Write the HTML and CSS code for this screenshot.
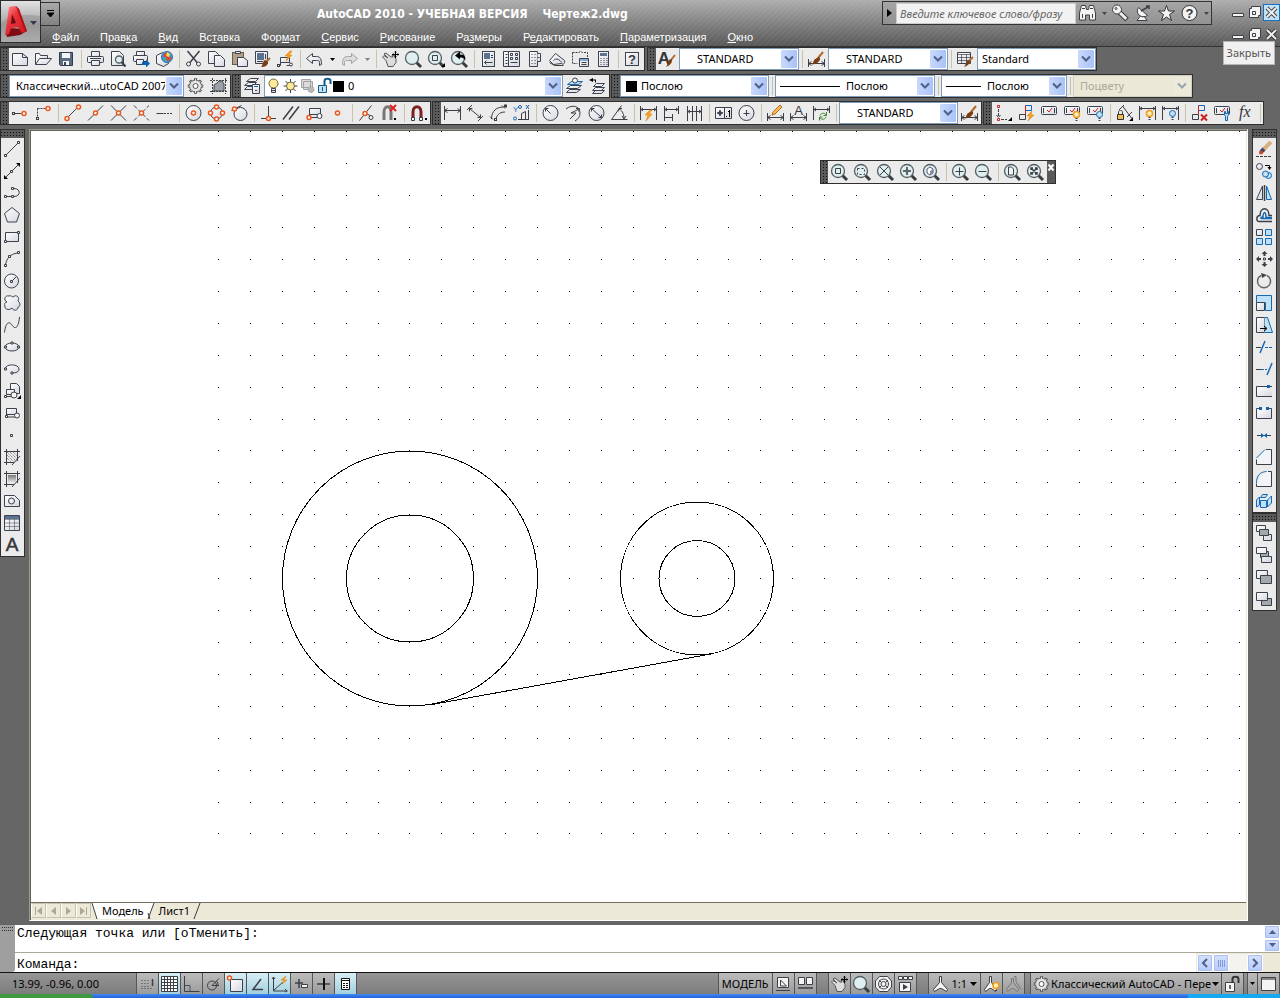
FILE: index.html
```html
<!DOCTYPE html>
<html lang="ru">
<head>
<meta charset="utf-8">
<title>AutoCAD 2010</title>
<link rel="stylesheet" href="styles.css">
</head>
<body>
<svg class="sprite" aria-hidden="true">
<defs>
<linearGradient id="pg" x1="0" y1="0" x2="1" y2="1"><stop offset="0" stop-color="#fff"/><stop offset="1" stop-color="#d5d8e0"/></linearGradient>
<linearGradient id="dk" x1="0" y1="0" x2="0" y2="1"><stop offset="0" stop-color="#777"/><stop offset="1" stop-color="#eee"/></linearGradient>
<linearGradient id="red" x1="0" y1="0" x2="1" y2="1"><stop offset="0" stop-color="#f99"/><stop offset=".4" stop-color="#e8323a"/><stop offset="1" stop-color="#d3131b"/></linearGradient>
<g id="lens"><path class="hd" d="M11.500 11.500l4.500 4.500"/><circle class="ln" cx="7" cy="7" r="6.500"/></g>
<g id="brush"><path class="wood" d="M15 1l-5 6"/><path class="br" d="M10.500 6c2 1 2 2 1 3.500c-2 3-5 4-8 4c2-1 1-2 3-5z"/></g>
<g id="bolt"><path class="bolt" d="M13 0l-5 5h3l-2 5l6-6h-3l3-4z"/></g>
<g id="bulbS"><circle class="bulb" cx="12.500" cy="9.500" r="3"/><path class="k" d="M11.500 13.500h2M11.500 15.500h2"/></g>
<g id="bulbB"><circle class="bf" cx="12.500" cy="9.500" r="3"/><path class="k" d="M11.500 13.500h2M11.500 15.500h2"/></g>
<g id="dim"><path class="k" d="M.5 8v8M16.500 8v8M.5 12.500h16M3.500 10.500l-3 2l3 2M13.500 10.500l3 2l-3 2"/></g>

<g id="new"><path class="f" d="M.5 2.500h10l5 4v8h-15z"/><path class="k" d="M10.500 2.500v4h5"/></g>
<g id="open"><path class="f" d="M.5 13.500v-11h4l1 2h7v3"/><path class="f" d="M.5 13.500l4-6h12l-5 6z"/></g>
<g id="save"><path class="nav" d="M1.500 1.500h13v13h-12l-1-1z"/><path class="w" d="M4 2h8v5h-8zM5 10h6v4h-6z"/><path class="navf" d="M6 11h2v3h-2z"/></g>
<g id="print"><path class="f" d="M4.500 6v-5.500h8v5.500"/><rect class="f" x=".5" y="5.500" width="16" height="6" rx="1"/><path class="f" d="M4.500 9.500h8v5h-8z"/><path class="k" d="M3 7.500h11"/></g>
<g id="preview"><path class="f" d="M1.500 .5h8l4 4v10h-12z"/><circle class="ln" cx="9" cy="8.500" r="3.500"/><path class="hd2" d="M11.500 11l4 4.500"/></g>
<g id="publish"><path class="f" d="M3.500 5v-4.500h8v4.500"/><rect class="f" x=".5" y="4.500" width="14" height="6" rx="1"/><path class="f" d="M3.500 8.500h7v5h-7z"/><path class="bs" d="M9 11h4v-2.500l4 4l-4 4v-2.500h-4z"/></g>
<g id="dwf"><path class="f" d="M.5 4.500l6-3l6 3v8l-5 3l-7-3z"/><circle cx="11" cy="6" r="5.500" fill="#3b9fe0" stroke="#2d6d9c"/><path d="M8 3l3-2v4l4 1v3l-4 1l-1-4l-3 0z" fill="#e5432c"/><path d="M11 1l3 2l-1 3l-3-1z" fill="#f6dc4c"/><path d="M7 7l3 1l1 3z" fill="#60b54a"/></g>
<g id="cut"><path class="k2" d="M2.500 0l10 12M14.500 0l-10 12"/><circle class="kw" cx="3.500" cy="13" r="2"/><circle class="kw" cx="13.500" cy="13" r="2"/></g>
<g id="copy"><path class="f" d="M.5 .5h7l3 3v9h-10z"/><path class="f" d="M6.500 4.500h6l4 4v7h-10z"/></g>
<g id="paste"><rect x="1.500" y="1.500" width="11" height="12" fill="#b3a289" stroke="#6b5b45"/><path class="f" d="M4.500 .5h5v2h-5z"/><path class="f" d="M6.500 6.500h6l4 3v6h-10z"/></g>
<g id="match"><path class="f" d="M1.500 .5h12v12h-12z"/><path class="navb" d="M3 2h7v7h-7z"/><path class="k" d="M11.500 3v5M3 10.500h6"/><path class="wood" d="M16 7l-4 4"/><path class="br" d="M11 9c2 1 3 2 3 3c-1 3-3 4-7 4c2-1 1-5 4-7z"/></g>
<g id="bedit"><path class="f" d="M3.500 6.500h9v5h-9z"/><path class="k" d="M3.500 11.500v3h-2M9.500 14.500h5"/><circle class="kw" cx="14" cy="13.500" r="1.500"/><rect class="kw" x=".5" y="13.500" width="2" height="2"/><use href="#bolt"/></g>
<g id="undo"><path class="f" d="M.5 7.500l6-5v3h4c4 0 5 3 5 8l-2 1v-3c0-2-1-2-3-2h-4v3z"/></g>
<g id="redo"><path class="fg" d="M16.500 7.500l-6-5v3h-4c-4 0-5 3-5 8l2 1v-3c0-2 1-2 3-2h4v3z"/></g>
<g id="pan"><path class="gf" d="M4 9.500l-3.500-3.500l1.500-1.500l4 2.500l-4-4l2-1l5 4h2l-1-2l2-.5l2 5v3l-3 4h-5z"/><path d="M13.500 0v7M10 3.500h7" stroke="#000"/><path d="M12 1.500l1.500-1.500l1.500 1.500zM12 5.500l1.500 1.500l1.500-1.500zM11.500 2l-1.500 1.500l1.500 1.500zM15.500 2l1.500 1.500l-1.500 1.500z"/></g>
<g id="zoom"><use href="#lens"/></g>
<g id="zwin"><use href="#lens"/><path class="k" d="M4.500 4.500h5v5h-5z"/></g>
<g id="zwinc"><use href="#zwin"/><path d="M17 12v4h-4z"/></g>
<g id="zprev"><use href="#lens"/><path d="M4 4.500l5-4v3c5 0 6 3 5 6c-1-3-3-3-5-3v2z"/></g>
<g id="props"><rect class="f" x="2.500" y=".5" width="12" height="15"/><path class="navb" d="M4 2h6v6h-6z"/><path class="k" d="M11 4.500h2M11 6.500h2M4.500 11.500h8M6.500 9.500l-2 2l2 2"/></g>
<g id="dc"><path class="f" d="M5.500 .5h11v15h-11zM.5 .5h5v15h-5z"/><path class="k" d="M2.500 3.500h2M2.500 6.500h2M2.500 9.500h2M2.500 12.500h2M7.500 2.500h2v2h-2zM12.500 2.500h2v2h-2zM7.500 6.500h2v2h-2zM12.500 6.500h2v2h-2zM7.500 11.500h7"/></g>
<g id="tp"><path class="f" d="M3.500 .5h8v15h-8z"/><path class="f" d="M11.500 2.500h3v8h-3"/><path class="k" d="M5.500 3.500h1M8.500 3.500h1M5.500 6.500h1M8.500 6.500h1M5.500 9.500h1M8.500 9.500h1M5.500 12.500h1M8.500 12.500h1M11.500 6.500h2"/></g>
<g id="ssm"><path class="f" d="M.5 9.500l6-7l9 7c1 2-1 5-3 3l-8 1z"/><path class="k" d="M4.500 9.500c3-3 6-1 8 2M.5 11.500l5 3h9"/></g>
<g id="mark"><path class="k" stroke-dasharray="2 1" d="M.5 1.500h6l2-1l2 1h5v5M.5 1.500v11h5"/><path class="f" d="M7.500 7.500h9v8h-9z"/><path class="bl" d="M8 9h8"/><path class="k" d="M9.500 11.500h5M9.500 13.500h5"/></g>
<g id="calc"><rect class="f" x="3.500" y=".5" width="10" height="15"/><path class="navb" d="M5 2h7v3h-7z"/><path class="k" stroke-dasharray="1 2" d="M5.500 7.500h7M5.500 9.500h7M5.500 11.500h7M5.500 13.500h7"/></g>
<g id="help"><rect class="f" x="1.500" y="1.500" width="13" height="13"/><text x="8" y="13" class="t b m">?</text></g>
<g id="style"><text x="5" y="13" class="t b m l">A</text><path class="wood" d="M16 4l-4 5"/><path class="br" d="M12 8c2 1 1 6-5 8c2-2 1-7 5-8z"/></g>
<g id="dimst"><use href="#dim"/><use href="#brush"/></g>
<g id="tabst"><path class="f" d="M.5 1.500h13v11h-13z"/><path class="k" d="M.5 3.500h13M4.500 3.500v9M9.500 3.500v9M.5 6.500h13M.5 9.500h13" opacity=".7"/><path class="wood" d="M16 6l-4 4"/><path class="br" d="M12 9c2 1 1 5-5 7c2-2 1-6 5-7z"/></g>

<g id="gear"><path d="M8.500 .3v15.400M.8 8h15.400M3 2.500l11 11M14 2.500l-11 11" stroke="#555" stroke-width="3"/><circle cx="8.500" cy="8" r="6" fill="#e4e4e4" stroke="#555"/><path d="M8.500 1v14M1.500 8h14M3.500 3l10 10M13.500 3l-10 10" stroke="#e4e4e4"/><circle cx="8.500" cy="8" r="2.500" fill="#fff" stroke="#555"/></g>
<g id="myws"><path class="k" d="M2.500 0v16M15.500 0v16M0 2.500h17M0 13.500h17" stroke-dasharray="2 1"/><path d="M4 13v-6l3-2l2-2h3l2 3v7z" fill="#9aa1aa" stroke="#444"/></g>
<g id="layers"><path class="f" d="M6.500 .5h8l-3 3h-9zM4.500 4.500h8l-3 3h-9zM3.500 8.500h8l-3 3h-8z"/><path class="f" d="M8.500 6.500h7v9h-7z"/><path class="bl" d="M10 8.500h4"/><path class="k" d="M11 12.500h2"/></g>
<g id="bulb"><circle class="bulb2" cx="8.500" cy="5.500" r="4.500"/><path class="f" d="M6.500 10.500h4v4h-4z"/><path class="k" d="M6.500 12.500h4"/></g>
<g id="sun"><path class="k" d="M8.500 1v14M1.500 8h14M3.500 3l10 10M13.500 3l-10 10"/><circle class="bulb2" cx="8.500" cy="8" r="4"/></g>
<g id="frz"><path class="fg" d="M2.500 1.500h9v8h-9zM4.500 3.500h9v8h-9z"/><circle cx="12" cy="11.500" r="3" fill="#bbb" stroke="#999" stroke-dasharray="2 1"/></g>
<g id="lock"><path d="M2.500 7.500h8v7h-8z" fill="#bfe3f5" stroke="#115b8c"/><path d="M8.500 7v-4c0-3 6-3 6 0v3" stroke="#115b8c" stroke-width="2" fill="none"/><path d="M6.500 9v4" stroke="#115b8c"/></g>
<g id="laymk"><path class="bf" d="M5.500 3.500h11l-4 3h-11z"/><path class="f" d="M4.500 7.500h11l-4 3h-11zM3.500 11.500h11l-4 3h-10z"/><circle class="kw" cx="9" cy="2.500" r="2.500"/></g>
<g id="layprev"><path class="f" d="M7.500 5.500h8l-3 3h-8zM6.500 9.500h9l-3 3h-9zM6.500 12.500h9l-3 3h-9z"/><path d="M0 2l4-2v4zM3 1.500h4v3h-1v-2h-3z"/></g>

<g id="track"><path class="k" d="M3 8.500h6"/><rect class="kw" x=".5" y="7.500" width="2" height="2"/><circle class="o" cx="12" cy="8.500" r="2"/></g>
<g id="from"><path class="k" stroke-dasharray="2 1" d="M2.500 3.500h8M2.500 3.500v9"/><circle class="o" cx="13" cy="3.500" r="2"/><rect class="kw" x="1.500" y="12.500" width="2" height="2"/></g>
<g id="end"><path class="k" d="M3.500 12.500l9-9"/><circle class="o" cx="3" cy="13.500" r="2"/><circle class="o" cx="14.500" cy="2" r="2"/></g>
<g id="mid"><path class="k" d="M1 15.500l15-15"/><circle class="o" cx="8.500" cy="8" r="2"/></g>
<g id="int"><path class="k" d="M1 .5l15 15M1 15.500l15-15"/><circle class="o" cx="8.500" cy="8" r="2"/></g>
<g id="app"><path class="k" stroke-dasharray="4 2" d="M1 .5l15 15M1 15.500l15-15"/><circle class="o" cx="8.500" cy="8" r="2"/></g>
<g id="ext"><path class="k" d="M.5 8.500h7"/><path class="k" stroke-dasharray="2 1" d="M8 8.500h9"/></g>
<g id="cen"><circle class="f" cx="8.500" cy="8" r="7.500"/><circle class="o" cx="8.500" cy="8" r="2"/></g>
<g id="qua"><circle class="f" cx="8.500" cy="8" r="6"/><circle class="o" cx="8.500" cy="2" r="2"/><circle class="o" cx="8.500" cy="14" r="2"/><circle class="o" cx="2.500" cy="8" r="2"/><circle class="o" cx="14.500" cy="8" r="2"/></g>
<g id="tan"><path class="k" d="M.5 5.500l10-5"/><circle class="f" cx="9.500" cy="9" r="6.500"/><circle class="o" cx="3.500" cy="4" r="2"/></g>
<g id="per"><path class="k" d="M8.500 1v11M1 13.500h15"/><circle class="o" cx="8.500" cy="13.500" r="2"/></g>
<g id="par"><path class="k2" d="M0 14.500l10-13M6 14.500l10-13"/></g>
<g id="ins"><path class="f" d="M3.500 3.500h11v6h-11z"/><path class="k" d="M3.500 8.500v4h9"/><circle class="kw" cx="13.500" cy="11" r="2.500"/><circle class="o" cx="3" cy="12.500" r="2"/></g>
<g id="node"><circle class="o" cx="8.500" cy="8" r="2"/></g>
<g id="nea"><path class="k" d="M1.500 15.500l12-15M9 9l4 2"/><circle class="o" cx="7" cy="8.500" r="2"/><circle class="kw" cx="13" cy="12.500" r="2"/></g>
<g id="mag"><path d="M3 14v-7c0-7 8-7 8 0v7" fill="none" stroke="#7d2020" stroke-width="3"/><path d="M1.500 12.500h3v3h-3zM9.500 12.500h3v3h-3z" class="kw"/><path d="M15 13h2v2h-2z"/></g>
<g id="nomag"><path d="M3 15v-8c0-7 7-7 7 0v8" fill="none" stroke="#777" stroke-width="3"/><path d="M9 0l6 6M15 0l-6 6" stroke="#d22" stroke-width="2"/><path d="M13 13h2v2h-2z"/></g>

<g id="dlin"><path class="k" d="M.5 1v14M16.500 1v14M.5 5.500h16M3.500 3.500l-3 2l3 2M13.500 3.500l3 2l-3 2"/></g>
<g id="dali"><path class="k" d="M0 5l5-5M11 16l5-5M2.500 3.500l11 9M2.500 6.500v-3h3M13.500 9.500v3h-3"/></g>
<g id="darc"><path class="k" d="M1.500 14c0-8 5-12 12-12M6 15c0-4 3-8 9-8M0 11.500l3 3M12 .5l3 3"/><rect class="kw" x="14.500" y="0" width="2" height="2"/><rect class="kw" x="4.500" y="13.500" width="2" height="2"/></g>
<g id="dord"><path class="k" d="M5 14.500h11M8.500 14.500v-6l4-2v8M15.500 5v9"/><text x="0" y="7" class="t s blue">Y</text><circle class="bo" cx="2" cy="13.500" r="1.500"/><circle class="bo" cx="7" cy="2" r="1.500"/><path class="bl" d="M13 0l3 4M16 0l-3 4"/></g>
<g id="drad"><circle class="f" cx="8.500" cy="8" r="7.500"/><path class="k" d="M3.500 3.500l5 5M3.500 6.500v-3h3"/></g>
<g id="djog"><path class="k" d="M1 4c6-5 14-3 14 4c0 4-2 6-5 8M14 4l-8 4h5l-6 6M11 3.500l3.500 0l-1 3"/></g>
<g id="ddia"><circle class="f" cx="8.500" cy="8" r="7.500"/><path class="k" d="M3.500 3.500l10 9M3.500 6.500v-3h3M13.500 9.500v3h-3"/></g>
<g id="dang"><path class="k" d="M.5 14.500h16M.5 14.500l10-14M8 4c4 2 5 6 5 10M7 6.500l1-3h3M11 11l2 3l2-3"/></g>
<g id="dqui"><path class="k" d="M.5 1v14M16.500 1v14M.5 4.500h16M3 3l-2 1.500l2 1.500M14 3l2 1.500l-2 1.500"/><path class="bolt" d="M10 5l-5 5h3l-2 6l6-7h-3l3-4z"/></g>
<g id="dbas"><path class="k" d="M1.500 1v15M15.500 1v8M1.500 4.500h14M1.500 12.500h8M9.500 9v7M4 3l-2 1.500l2 1.500M13 3l2 1.500l-2 1.500"/></g>
<g id="dcon"><path class="k" d="M1.500 1v15M6.500 1v15M10.500 1v15M15.500 1v15M1.500 6.500h14M4 5l-2 1.500l2 1.500M13 5l2 1.500l-2 1.500"/></g>
<g id="tol"><path class="f" d="M.5 2.500h16v11h-16z"/><path class="k" d="M9.500 3v10"/><path class="k2" d="M2 8h6M5 5v6"/><circle class="k" cx="5" cy="8" r="1.500"/><path d="M11 11h1v1h-1zM14 5h1v7h-1zM13 6h1v1h-1z"/></g>
<g id="cmk"><circle class="f" cx="8.500" cy="8" r="7.500"/><path class="k" d="M8.500 5v6M5.500 8.500h6"/></g>
<g id="dedi"><use href="#dim"/><path d="M5 10l1-3l7-7l2 2l-7 7z" fill="#f6bc53" stroke="#b46b18"/></g>
<g id="dted"><use href="#dim"/><text x="8.500" y="10" class="t m">A</text></g>
<g id="dupd"><path class="k" d="M.5 1v14M16.500 1v7M.5 4.500h16M3 3l-2 1.500l2 1.500M14 3l2 1.500l-2 1.500"/><path d="M7 10.500c1-3 6-3 6 0M13 12c-1 3-6 3-6 0M13.500 7v3.500h-3M6.500 15.500v-3.500h3" stroke="#3c8428" fill="none"/></g>

<g id="gcon"><path d="M2.500 .5h2v2h-2zM2.500 13.500h2v2h-2z" fill="#fff" stroke="#c22"/><path class="k" stroke-dasharray="3 1" d="M3.500 4v8M6 14.500h6M1.500 10l2 2.500l2-2.500"/><path d="M17 12v4h-4z"/></g>
<g id="acon"><path class="bl" d="M7.500 .5h6v5h-6z"/><path class="rd" d="M7.500 .5v9"/><path class="k" d="M1.500 9.500h6v5h-6z"/><path class="bolt" d="M14 6l-5 5h3l-2 5l6-6h-3z"/></g>
<g id="c1"><rect class="f" x=".5" y="1.500" width="15" height="8" rx="1"/><path class="k" d="M2.500 3v5M13.500 3v5"/><path class="rd" d="M6 5l2 2l3-4"/></g>
<g id="c2"><use href="#c1"/><use href="#bulbS"/></g>
<g id="c3"><use href="#c1"/><use href="#bulbB"/></g>
<g id="dcn"><path class="k" d="M6.500 1l9 12M3 5l5-5M11 12l5-5"/><path d="M1.500 9.500h6v5h-6z" fill="#f6bc53" stroke="#333"/><path class="k" d="M2.500 9v-2c0-2 4-2 4 0v2"/><path d="M17 12v4h-4z"/></g>
<g id="d2"><path class="k" d="M.5 1v14M16.500 1v14M.5 3.500h16M3 2l-2 1.500l2 1.500M14 2l2 1.500l-2 1.500"/><circle class="bulb" cx="10.500" cy="8.500" r="3"/><path class="k" d="M9.500 12.500h2M9.500 14.500h2"/></g>
<g id="d3"><path class="k" d="M.5 1v14M16.500 1v14M.5 3.500h16M3 2l-2 1.500l2 1.500M14 2l2 1.500l-2 1.500"/><circle class="bf" cx="10.500" cy="8.500" r="3"/><path class="k" d="M9.500 12.500h2M9.500 14.500h2"/></g>
<g id="delc"><path class="bl" d="M7.500 .5h6v5h-6z"/><path class="rd" d="M7.500 .5v9"/><path class="k" d="M1.500 9.500h6v5h-6z"/><path class="rd" d="M10 9.500l6 6M16 9.500l-6 6" stroke-width="2"/></g>
<g id="cset"><use href="#c1"/><path class="bf" d="M11.500 15.500v-4l-1-2v-3h1v2h2v-2h1v3l-1 2v4z"/></g>
<g id="fx"><text x="2" y="12" class="t fx">fx</text></g>

<g id="line"><path class="k" d="M2 14L14 2"/><path class="kw" d="M.5 13.500h2v2h-2zM13.500 .5h2v2h-2z"/></g>
<g id="xline"><path class="k" d="M2 14L14 2"/><path d="M0 16v-4l4 4zM16 0v4l-4-4z"/><path class="kw" d="M6.500 7.500h2v2h-2z"/></g>
<g id="pline"><path class="k" d="M1 11.500h9c7 0 7-8 0-8h-2"/><path class="kw" d="M.5 10.500h2v2h-2zM7.500 10.500h2v2h-2zM7.500 2.500h2v2h-2z"/></g>
<g id="poly"><path class="f" d="M8 .5l7.500 6l-3 8.500h-9l-3-8.500z"/></g>
<g id="rect"><path class="f" d="M1.500 3.500h13v9h-13z"/><path class="kw" d="M.5 11.500h2v2h-2zM13.500 2.500h2v2h-2z"/></g>
<g id="arc"><path class="k" d="M1.500 14c1-7 5-11 12-12"/><path class="kw" d="M.5 13.500h2v2h-2zM4.500 4.500h2v2h-2zM13.500 .5h2v2h-2z"/></g>
<g id="circ"><circle class="f" cx="7.500" cy="8" r="7"/><path class="k" d="M8 8l4-4"/><path class="kw" d="M6.500 7.500h2v2h-2z"/></g>
<g id="cloud"><path class="f" d="M3 7c-4-2-2-7 2-6c2-1 3 1 4 1c3-3 7 0 5 4c3 2 2 6 0 6c0 4-5 4-6 1c-3 3-8 1-7-2c-1-2 0-4 2-4z"/></g>
<g id="spl"><path class="k" d="M.5 15.500c1-9 4-12 7-8c4 6 7 3 8-7.500"/></g>
<g id="ell"><ellipse class="f" cx="8" cy="8" rx="7" ry="4"/><path class="kw" d="M.5 7h2v2h-2zM13.500 7h2v2h-2zM7 3h2v2h-2z"/></g>
<g id="ellarc"><path class="f" d="M1 8c1-6 14-5 14 0c0 3-3 4-7 4"/><path class="kw" d="M.5 7h2v2h-2zM7 11h2v2h-2z"/></g>
<g id="insb"><path class="f" d="M6.500 .5h6l3 3v7h-9z"/><path class="f" d="M2.500 6.500h8v5h-8z"/><path class="k" d="M1.500 13.500h8"/><circle class="kw" cx="10" cy="12" r="3"/><path class="kw" d="M.5 12.500h2v2h-2z"/><path d="M17 12v4h-4z"/></g>
<g id="mkb"><path class="f" d="M2.500 3.500h10v6h-10z"/><path class="k" d="M2.500 9v3h9"/><circle class="kw" cx="13" cy="10.500" r="2.500"/><path class="kw" d="M1.500 10.500h2v2h-2z"/></g>
<g id="pt"><path class="kw" d="M6.500 7.500h2v2h-2z"/></g>
<g id="hat"><path class="k" d="M2.500 0v16M13.500 0v12M0 2.500h16M0 13.500h10M8 16l8-9"/><path d="M3 3l10 10M6 3l7 7M9 3l4 4M3 6l7 7M3 9l4 4" stroke="#667" stroke-dasharray="1 1"/></g>
<g id="grad"><path d="M4 4h8v8h-8z" fill="url(#dk)"/><path class="k" d="M2.500 0v16M13.500 0v12M0 2.500h16M0 13.500h10M8 16l8-9"/></g>
<g id="reg"><path class="f" d="M.5 2.500h10l5 5v6h-15z"/><circle class="k" cx="7.500" cy="8" r="3"/></g>
<g id="tab"><path class="f" d="M.5 .5h15v15h-15z"/><path class="navb" d="M1 1h14v3h-14z"/><path class="k" d="M.5 4.500h15M5.500 4v11M10.500 4v11M.5 8h15M.5 11.500h15" opacity=".5"/></g>
<g id="mtext"><text x="8" y="14" class="t m l b2">A</text></g>

<g id="erase"><path class="k" d="M0 15.500h16" stroke-dasharray="3 1"/><path d="M15 1l-8 8" stroke="#d5b27c" stroke-width="4"/><path d="M8 8l-3 3" stroke="#3a4a66" stroke-width="4"/><circle cx="5" cy="11.500" r="2" fill="#d8401c"/></g>
<g id="ecopy"><circle class="f" cx="3.500" cy="3.500" r="3"/><circle class="bf" cx="12.500" cy="12.500" r="3"/><circle class="bf" cx="9.500" cy="11" r="3"/><path d="M9 2.500h4.500v2" stroke="#000" fill="none"/><path d="M11.500 4h4l-2 3z"/></g>
<g id="mir"><path class="f" d="M6.500 1v13.500h-6z"/><path class="bf" d="M10.500 1v13.500h5z"/><path class="k2" d="M8.500 0v16"/></g>
<g id="off"><path class="k2" d="M16 14.500h-13c-3 0-3-6 1-6c0-9 9-9 9 0h3"/><path class="bl2" d="M16 11.500h-10c-2 0-1-2 1-1c0-6 3-7 3 0h6"/></g>
<g id="array"><path class="f" d="M.5 .5h6v6h-6z"/><path class="bf" d="M9.500 .5h6v6h-6zM.5 9.500h6v6h-6zM9.500 9.500h6v6h-6z"/></g>
<g id="move"><path class="kd" d="M5.500 3l3-3l3 3h-2v2h-2v-2zM5.500 13l3 3l3-3h-2v-2h-2v2zM3 5l-3 3l3 3v-2h2v-2h-2zM14 5l3 3l-3 3v-2h-2v-2h2z"/><path class="kw" d="M7.500 7h2v2h-2z"/></g>
<g id="rot"><path d="M5 2.500a6.500 6.500 0 1 0 6 0" fill="none" stroke="#666" stroke-width="1.500"/><path class="kd" d="M5 0l6 2l-5 3z"/></g>
<g id="scale"><path class="bf" d="M.5 .5h15v15h-6v-8h-9z"/><path class="f" d="M.5 7.500h8v8h-8z"/></g>
<g id="str"><path class="f" d="M.5 .5h8v15h-8z"/><path class="bf" d="M8.500 .5h3l5 15h-8"/><path d="M4 11.500h6M8 9l3 2.500l-3 2.500" stroke="#000" fill="none"/></g>
<g id="trim"><path class="k" d="M0 8.500h5"/><path class="bl2" d="M4 14l5-12"/><path class="bl" stroke-dasharray="3 1" d="M9 8.500h8"/></g>
<g id="extd"><path class="k" d="M0 8.500h5"/><path class="bl" stroke-dasharray="3 1" d="M5 8.500h6"/><path class="bl2" d="M11 14l5-12"/></g>
<g id="brk1"><path class="f" d="M16 13.500h-15.500v-10h15.500"/><path class="bs" d="M11 2h3v3h-3z"/></g>
<g id="brk"><path class="f" d="M3 3.500h-2.500v10h15v-10h-3"/><path class="bs" d="M3 2h3v3h-3zM10 2h3v3h-3z"/></g>
<g id="join"><path class="k" d="M1 8.500h14"/><path class="bs" d="M5 6v5l3-2.500zM11 6v5l-3-2.500z"/></g>
<g id="cham"><path class="w" d="M9 .5h6.500v15h-15v-6z"/><path class="k" d="M10 .5h5.500v15h-15v-5"/><path class="bl" d="M.5 9l8.500-8.500"/></g>
<g id="fil"><path class="w" d="M10 .5h5.500v15h-15v-5z"/><path class="k" d="M12 .5h3.500v15h-15v-3"/><path class="bl" d="M.5 12c0-8 4-11 10-11.500"/></g>
<g id="expl"><path class="bf" d="M4.500 7.500h6v7h-6zM4.500 4.500l2-3h5l-2 3zM11.500 7l4-4v7l-4 4zM.5 7l3-3v8l-3 2z"/></g>
<g id="or1"><path class="f" d="M.5 .5h9v6h-9zM7.500 9.500h8v6h-8z"/><path class="gk" d="M3.500 4.500h9v6h-9z"/></g>
<g id="or2"><path class="gk" d="M4.500 4.500h8v6h-8z"/><path class="f" d="M.5 .5h10v6h-10zM5.500 9.500h10v6h-10z"/></g>
<g id="or3"><path class="f" d="M.5 1.500h11v8h-11z"/><path class="gk" d="M4.500 6.500h11v8h-11z"/></g>
<g id="or4"><path class="gk" d="M5.500 7.500h10v7h-10z"/><path class="f" d="M.5 1.500h11v8h-11z"/></g>

<g id="zdyn"><use href="#lens"/><path class="k" stroke-dasharray="2 2" d="M3.500 4.500h7v6h-7z"/></g>
<g id="zsc"><use href="#lens"/><path class="k" d="M3 3l8 8M11 3l-8 8"/></g>
<g id="zcen"><use href="#lens"/><path class="k2" d="M7 3v8M3 7h8"/><path d="M6 6h2v2h-2z" fill="#eee" stroke="#444"/></g>
<g id="zobj"><use href="#lens"/><path d="M4 5l3-2l3 2v4l-3 2l-3-2z" fill="#fff" stroke="#557"/><path d="M7 7v4l3-2v-4z" fill="#88a"/></g>
<g id="zin"><use href="#lens"/><path class="k" d="M7.500 3.500v8M3.500 7.500h8"/></g>
<g id="zout"><use href="#lens"/><path class="k" d="M3.500 7.500h8"/></g>
<g id="zall"><use href="#lens"/><path class="kw" d="M4.500 3h3l2 2v6h-5z"/></g>
<g id="zext"><use href="#lens"/><path class="k2" d="M4 4l6 6M10 4l-6 6M4 6v-2h2M8 4h2v2M4 8v2h2M8 10h2v-2"/></g>

<g id="bino"><path class="kw" d="M.5 15v-7l2-7.500h4l1 4h2l1-4h4l2 7.500v7h-6v-5h-4v5z"/><path class="k" d="M3 3.500h3M11 3.500h3M3.500 9v4M13.500 9v4"/></g>
<g id="key"><path d="M7 7l8 7.500" stroke="#333" stroke-width="5"/><path d="M6 6l8.300 7.800" stroke="#eee" stroke-width="3"/><circle class="kw" cx="5" cy="4.500" r="4.500"/><circle class="k" cx="4" cy="3.500" r="1"/></g>
<g id="dish"><path class="kw" d="M3.500 2.500c-4 6 3 12 9 8zM9 11l3 4.500h-10l3-4"/><path class="k2" d="M6 6l7-4M11 1h3v3"/></g>
<g id="star"><path d="M8.500 .5l2 5.500h6l-5 3.500l2 6l-5-3.500l-5 3.500l2-6l-5-3.500h6z" fill="#f3f3f3" stroke="#333"/></g>
<g id="qm"><circle cx="8.500" cy="8" r="7.500" fill="#f3f3f3" stroke="#333"/><text x="8.500" y="13" class="t b m">?</text></g>

<g id="snap"><path class="k" stroke-dasharray="1 2" d="M2.500 4.500h9M2.500 7.500h9M2.500 10.500h9M2.500 12.500h12"/><path class="k2" d="M13.500 3v7"/></g>
<g id="gridi"><path d="M1 .5h15v15h-15z" fill="#fff"/><path class="k" d="M.5 .5h16v15h-16zM.5 3.500h16M.5 6.500h16M.5 9.500h16M.5 12.500h16M3.500 0v16M6.500 0v16M9.500 0v16M12.500 0v16"/></g>
<g id="orth"><path class="k" d="M1.500 0v15.500h15"/><path d="M2 9.500h5v6" fill="none" stroke="#456"/></g>
<g id="polar"><circle class="k" cx="7" cy="9.500" r="4.500"/><path class="k" d="M7 9.500l7-7M7 9.500h7M11 5c2 1 2 3 2 4"/></g>
<g id="osn"><path class="f" d="M3.500 3.500h12v12h-12z"/><circle class="o" cx="2.500" cy="2" r="2"/></g>
<g id="otr"><path class="k2" d="M12 3l-8 10.500h10"/></g>
<g id="ducs"><path class="k" d="M2.500 1v14h14M2 15l10-9M1 3l1.500-2l1.500 2M14 13l2 2l-2 1"/><path class="bolt" d="M15 0l-5 4h3l-2 4l5-4h-3z"/></g>
<g id="dyn"><path class="k2" d="M6 3v9M2 7h8"/><path class="kw" d="M8.500 8.500h6v3h-6z"/></g>
<g id="lwt"><path class="k2" d="M2 8h13"/><path d="M9 2v12" stroke="#111" stroke-width="2"/></g>
<g id="qp"><path d="M4.500 2.500h8v11h-8z" fill="#fff" stroke="#111"/><path d="M5 4.500h7M6 7.500h2M9 7.500h2M6 9.500h2M9 9.500h2M6 11.500h2M9 11.500h2" stroke="#111"/></g>
<g id="mlay"><path class="kw" d="M2.500 1.500h11v10h-11z"/><path class="k" d="M5.500 4v6h6zM1 14.500h14"/></g>
<g id="qlay"><path class="kw" d="M1.500 1.500h6v7h-6zM9.500 1.500h6v7h-6z"/><path class="k2" d="M1 12h15"/></g>
<g id="wheel"><path class="kw" d="M.5 5l4-4.500h8l4 4.500v6l-4 4.500h-8l-4-4.500z"/><circle class="k" cx="8.500" cy="8" r="5"/><circle class="k" cx="8.500" cy="8" r="2.500"/><path class="k" d="M4 4l2 2M13 4l-2 2M4 12l2-2M13 12l-2-2"/></g>
<g id="show"><path class="kw" d="M1.500 .5h4v3h-4zM6.500 .5h4v3h-4zM11.500 .5h4v3h-4zM2.500 6.500h11v9h-11z"/><path class="kd" d="M6 8l5 3l-5 3z"/></g>
<g id="ann"><path class="kw" d="M7.500 .5h2v6l6 7l-1 2l-5-3h-2l-5 3l-1-2l6-7z"/></g>
<g id="annv"><path class="kw" d="M6.500 .5h2v6l5 7l-1 2l-4-3h-2l-4 3l-1-2l5-7z"/><circle class="bulb" cx="13" cy="9.500" r="3"/><path class="k" d="M12 14.500h2"/></g>
<g id="anna"><path d="M6.500 2.500h2v4l5 7l-1 2l-4-3h-2l-4 3l-1-2l5-7zM9 .5h2v5l5 8" fill="#aaa" stroke="#777"/></g>
<g id="lock2"><path class="kw" d="M1.500 6.500h9v9h-9z"/><path d="M8.500 7v-4c0-3 6-3 6 0v4" stroke="#333" fill="none" stroke-width="2"/><path class="k2" d="M6 9v4"/></g>
<g id="clean"><path class="kw" d="M1.500 1.500h14v13h-14z"/><path d="M2 2h13v2h-13z" fill="#888"/></g>
<g id="dn"><path d="M0 0h7l-3.500 4z"/></g>
<g id="chev"><path d="M4 6.500l4 4l4-4" fill="none" stroke="#4d6185" stroke-width="2"/></g>
</defs>
</svg>

<header class="title">
  <div class="appmenu">
    <button class="app" aria-label="Меню приложения">
      <svg width="39" height="41"><path d="M0 22c10-8 24-9 39-7v26h-39z" fill="#8f8f8f" opacity=".5"/><path d="M5 32l3-5l15 1l3 2l-7 4l-13 2z" fill="#7d0d12"/><path d="M8 6l7-1l3 3l8 22l-5 2l-4-6l-7 1l-2 6l-4 1z" fill="url(#red)"/><path d="M11 13l4 9l-5 1z" fill="#6b0d12"/><path d="M15 5l3 3l8 22l-2 1z" fill="#b3131b"/><path d="M29 20h7l-3.500 4z" fill="#333a48"/></svg>
    </button>
    <button class="qat" aria-label="Настройка панели"><svg width="9" height="8"><path d="M1 .5h7M1 3h7l-3.500 4z" stroke="#000"/></svg></button>
  </div>
  <div class="titlemain">
    <div class="caption"><h1><span>AutoCAD 2010 - УЧЕБНАЯ ВЕРСИЯ</span><span>Чертеж2.dwg</span></h1></div>
    <nav class="menu">
      <button><u>Ф</u>айл</button><button>Прав<u>к</u>а</button><button><u>В</u>ид</button><button>Вс<u>т</u>авка</button><button>Фор<u>м</u>ат</button><button><u>С</u>ервис</button><button><u>Р</u>исование</button><button>Ра<u>з</u>меры</button><button>Р<u>е</u>дактировать</button><button><u>П</u>араметризация</button><button><u>О</u>кно</button>
    </nav>
  </div>
  <div class="info">
    <div class="infobar">
      <button class="tri" aria-label="Свернуть"><svg width="5" height="8"><path d="M0 0l5 4l-5 4z"/></svg></button>
      <input class="search" type="text" placeholder="Введите ключевое слово/фразу" aria-label="Поиск">
      <button class="tb" aria-label="Найти"><svg class="i"><use href="#bino"/></svg></button><button class="dd" aria-label="Ещё"><svg class="d5" viewBox="0 0 7 4"><use href="#dn"/></svg></button>
      <button class="tb" aria-label="Подписка"><svg class="i"><use href="#key"/></svg></button><button class="tb" aria-label="Связь"><svg class="i"><use href="#dish"/></svg></button><button class="tb" aria-label="Избранное"><svg class="i"><use href="#star"/></svg></button><button class="tb" aria-label="Справка"><svg class="i"><use href="#qm"/></svg></button><button class="dd" aria-label="Ещё"><svg class="d5" viewBox="0 0 7 4"><use href="#dn"/></svg></button>
    </div>
    <div class="wins">
      <div class="winrow"><button aria-label="Свернуть окно"><svg width="13" height="13"><path d="M1.500 7.500h11v3h-11z" class="kw"/></svg></button><button aria-label="Развернуть"><svg width="13" height="13"><path class="kw" d="M3.500 .5h9v9h-2v2h-9v-9h2z"/><path class="k" d="M4.500 5.500h3v3h-3z"/></svg></button><button class="hot" aria-label="Закрыть окно"><svg width="13" height="13"><path d="M2 2l9 9M11 2l-9 9" stroke="#444" stroke-width="4"/><path d="M2 2l9 9M11 2l-9 9" stroke="#eee" stroke-width="2"/></svg></button></div>
      <div class="winrow"><button aria-label="Свернуть чертеж"><svg width="13" height="13"><path d="M1.500 7.500h11v3h-11z" class="kw"/></svg></button><button aria-label="Восстановить"><svg width="13" height="13"><path class="kw" d="M3.500 .5h9v9h-2v2h-9v-9h2z"/><path class="k" d="M4.500 5.500h3v3h-3z"/></svg></button><button aria-label="Закрыть чертеж"><svg width="13" height="13"><path d="M2 2l9 9M11 2l-9 9" stroke="#333" stroke-width="4"/><path d="M2 2l9 9M11 2l-9 9" stroke="#eee" stroke-width="2"/></svg></button></div>
    </div>
    <div class="tip" role="tooltip">Закрыть</div>
  </div>
</header>

<div class="bars">
  <div class="row">
    <div class="bar"><i class="grip"></i><button class="tb" aria-label="Создать"><svg class="i"><use href="#new"/></svg></button><button class="tb" aria-label="Открыть"><svg class="i"><use href="#open"/></svg></button><button class="tb" aria-label="Сохранить"><svg class="i"><use href="#save"/></svg></button><i class="sep"></i><button class="tb" aria-label="Печать"><svg class="i"><use href="#print"/></svg></button><button class="tb" aria-label="Просмотр"><svg class="i"><use href="#preview"/></svg></button><button class="tb" aria-label="Публикация"><svg class="i"><use href="#publish"/></svg></button><button class="tb" aria-label="3D DWF"><svg class="i"><use href="#dwf"/></svg></button><i class="sep"></i><button class="tb" aria-label="Вырезать"><svg class="i"><use href="#cut"/></svg></button><button class="tb" aria-label="Копировать"><svg class="i"><use href="#copy"/></svg></button><button class="tb" aria-label="Вставить"><svg class="i"><use href="#paste"/></svg></button><button class="tb" aria-label="Копирование свойств"><svg class="i"><use href="#match"/></svg></button><button class="tb" aria-label="Редактор блоков"><svg class="i"><use href="#bedit"/></svg></button><i class="sep"></i><button class="tb" aria-label="Отменить"><svg class="i"><use href="#undo"/></svg></button><button class="dd" aria-label="Список отмены"><svg class="d5" viewBox="0 0 7 4"><use href="#dn"/></svg></button><button class="tb" aria-label="Повторить"><svg class="i"><use href="#redo"/></svg></button><button class="dd off" aria-label="Список повтора"><svg class="d5" viewBox="0 0 7 4"><use href="#dn"/></svg></button><i class="sep"></i><button class="tb" aria-label="Панорамирование"><svg class="i"><use href="#pan"/></svg></button><button class="tb" aria-label="Зумирование"><svg class="i"><use href="#zoom"/></svg></button><button class="tb" aria-label="Рамка"><svg class="i"><use href="#zwinc"/></svg></button><button class="tb" aria-label="Предыдущий"><svg class="i"><use href="#zprev"/></svg></button><i class="sep"></i><button class="tb" aria-label="Свойства"><svg class="i"><use href="#props"/></svg></button><button class="tb" aria-label="Центр управления"><svg class="i"><use href="#dc"/></svg></button><button class="tb" aria-label="Инструментальные палитры"><svg class="i"><use href="#tp"/></svg></button><button class="tb" aria-label="Подшивки"><svg class="i"><use href="#ssm"/></svg></button><button class="tb" aria-label="Пометки"><svg class="i"><use href="#mark"/></svg></button><button class="tb" aria-label="Калькулятор"><svg class="i"><use href="#calc"/></svg></button><i class="sep"></i><button class="tb" aria-label="Справка"><svg class="i"><use href="#help"/></svg></button></div>
    <div class="bar"><i class="grip"></i><button class="tb" aria-label="Текстовые стили"><svg class="i"><use href="#style"/></svg></button><div class="combo w120"><select class="in16" aria-label="Текстовый стиль"><option>STANDARD</option></select><svg class="arr"><use href="#chev"/></svg></div><i class="sep"></i><button class="tb" aria-label="Размерные стили"><svg class="i"><use href="#dimst"/></svg></button><div class="combo w120"><select class="in16" aria-label="Размерный стиль"><option>STANDARD</option></select><svg class="arr"><use href="#chev"/></svg></div><i class="sep"></i><button class="tb" aria-label="Стили таблиц"><svg class="i"><use href="#tabst"/></svg></button><div class="combo w119"><select aria-label="Стиль таблиц"><option>Standard</option></select><svg class="arr"><use href="#chev"/></svg></div></div>
  </div>
  <div class="row">
    <div class="bar"><i class="grip"></i><div class="combo w175"><select class="in6" aria-label="Рабочее пространство"><option>Классический...utoCAD 2007</option></select><svg class="arr"><use href="#chev"/></svg></div><button class="tb" aria-label="Параметры"><svg class="i"><use href="#gear"/></svg></button><button class="tb" aria-label="Мое рабочее пространство"><svg class="i"><use href="#myws"/></svg></button></div>
    <div class="bar tight"><i class="grip"></i><button class="tb" aria-label="Диспетчер слоев"><svg class="i"><use href="#layers"/></svg></button><div class="combo w299"><svg class="i"><use href="#bulb"/></svg><svg class="i"><use href="#sun"/></svg><svg class="i"><use href="#frz"/></svg><svg class="i"><use href="#lock"/></svg><i class="sw"></i><select aria-label="Слой"><option>0</option></select><svg class="arr"><use href="#chev"/></svg></div><button class="tb" aria-label="Сделать слой текущим"><svg class="i"><use href="#laymk"/></svg></button><button class="tb" aria-label="Предыдущий слой"><svg class="i"><use href="#layprev"/></svg></button></div>
    <div class="bar tight"><i class="grip"></i><div class="combo w149"><i class="sw first"></i><select aria-label="Цвет"><option>Послою</option></select><svg class="arr"><use href="#chev"/></svg></div><i class="sep"></i><div class="combo w160"><i class="smp l60"></i><select aria-label="Тип линии"><option>Послою</option></select><svg class="arr"><use href="#chev"/></svg></div><i class="sep"></i><div class="combo w126"><i class="smp l35"></i><select aria-label="Вес линии"><option>Послою</option></select><svg class="arr"><use href="#chev"/></svg></div><i class="sep"></i><div class="combo dis w119"><select class="in6" disabled aria-label="Стиль печати"><option>Поцвету</option></select><svg class="arr"><use href="#chev"/></svg></div></div>
  </div>
  <div class="row">
    <div class="bar snaps"><i class="grip"></i><button class="tb" aria-label="Точка отслеживания"><svg class="i"><use href="#track"/></svg></button><button class="tb" aria-label="Смещение"><svg class="i"><use href="#from"/></svg></button><i class="sep"></i><button class="tb" aria-label="Конточка"><svg class="i"><use href="#end"/></svg></button><button class="tb" aria-label="Середина"><svg class="i"><use href="#mid"/></svg></button><button class="tb" aria-label="Пересечение"><svg class="i"><use href="#int"/></svg></button><button class="tb" aria-label="Кажущееся пересечение"><svg class="i"><use href="#app"/></svg></button><button class="tb" aria-label="Продолжение"><svg class="i"><use href="#ext"/></svg></button><i class="sep"></i><button class="tb" aria-label="Центр"><svg class="i"><use href="#cen"/></svg></button><button class="tb" aria-label="Квадрант"><svg class="i"><use href="#qua"/></svg></button><button class="tb" aria-label="Касательная"><svg class="i"><use href="#tan"/></svg></button><i class="sep"></i><button class="tb" aria-label="Нормаль"><svg class="i"><use href="#per"/></svg></button><button class="tb" aria-label="Параллельно"><svg class="i"><use href="#par"/></svg></button><button class="tb" aria-label="Точка вставки"><svg class="i"><use href="#ins"/></svg></button><button class="tb" aria-label="Узел"><svg class="i"><use href="#node"/></svg></button><i class="sep"></i><button class="tb" aria-label="Ближайшая"><svg class="i"><use href="#nea"/></svg></button><button class="tb" aria-label="Без привязки"><svg class="i"><use href="#nomag"/></svg></button><i class="sep"></i><button class="tb" aria-label="Параметры привязки"><svg class="i"><use href="#mag"/></svg></button></div>
    <div class="bar tight"><i class="grip"></i><button class="tb" aria-label="Линейный"><svg class="i"><use href="#dlin"/></svg></button><button class="tb" aria-label="Параллельный"><svg class="i"><use href="#dali"/></svg></button><button class="tb" aria-label="Длина дуги"><svg class="i"><use href="#darc"/></svg></button><button class="tb" aria-label="Ординатный"><svg class="i"><use href="#dord"/></svg></button><i class="sep"></i><button class="tb" aria-label="Радиус"><svg class="i"><use href="#drad"/></svg></button><button class="tb" aria-label="С изломом"><svg class="i"><use href="#djog"/></svg></button><button class="tb" aria-label="Диаметр"><svg class="i"><use href="#ddia"/></svg></button><button class="tb" aria-label="Угловой"><svg class="i"><use href="#dang"/></svg></button><i class="sep"></i><button class="tb" aria-label="Быстрый размер"><svg class="i"><use href="#dqui"/></svg></button><button class="tb" aria-label="Базовый"><svg class="i"><use href="#dbas"/></svg></button><button class="tb" aria-label="Продолжить"><svg class="i"><use href="#dcon"/></svg></button><i class="sep"></i><button class="tb" aria-label="Допуск"><svg class="i"><use href="#tol"/></svg></button><button class="tb" aria-label="Маркер центра"><svg class="i"><use href="#cmk"/></svg></button><i class="sep"></i><button class="tb" aria-label="Редактировать размер"><svg class="i"><use href="#dedi"/></svg></button><button class="tb" aria-label="Редактировать текст"><svg class="i"><use href="#dted"/></svg></button><button class="tb" aria-label="Обновить размер"><svg class="i"><use href="#dupd"/></svg></button><i class="sep"></i><div class="combo w119"><select class="in16" aria-label="Стиль размеров"><option>STANDARD</option></select><svg class="arr"><use href="#chev"/></svg></div><button class="tb" aria-label="Диспетчер стилей"><svg class="i"><use href="#dimst"/></svg></button></div>
    <div class="bar tight"><i class="grip"></i><button class="tb" aria-label="Геометрическая зависимость"><svg class="i"><use href="#gcon"/></svg></button><button class="tb" aria-label="Автоналожение"><svg class="i"><use href="#acon"/></svg></button><button class="tb" aria-label="Показать зависимости"><svg class="i"><use href="#c1"/></svg></button><button class="tb" aria-label="Показать все"><svg class="i"><use href="#c2"/></svg></button><button class="tb" aria-label="Скрыть все"><svg class="i"><use href="#c3"/></svg></button><i class="sep"></i><button class="tb" aria-label="Размерная зависимость"><svg class="i"><use href="#dcn"/></svg></button><button class="tb" aria-label="Показать размерные"><svg class="i"><use href="#d2"/></svg></button><button class="tb" aria-label="Скрыть размерные"><svg class="i"><use href="#d3"/></svg></button><i class="sep"></i><button class="tb" aria-label="Удалить зависимости"><svg class="i"><use href="#delc"/></svg></button><button class="tb" aria-label="Параметры зависимостей"><svg class="i"><use href="#cset"/></svg></button><button class="tb" aria-label="Диспетчер параметров"><svg class="i"><use href="#fx"/></svg></button><i class="sep"></i></div>
  </div>
</div>

<main class="work">
  <aside class="side">
    <div class="vbar"><i class="hgrip"></i><button class="tb" aria-label="Отрезок"><svg class="i"><use href="#line"/></svg></button><button class="tb" aria-label="Прямая"><svg class="i"><use href="#xline"/></svg></button><button class="tb" aria-label="Полилиния"><svg class="i"><use href="#pline"/></svg></button><button class="tb" aria-label="Многоугольник"><svg class="i"><use href="#poly"/></svg></button><button class="tb" aria-label="Прямоугольник"><svg class="i"><use href="#rect"/></svg></button><button class="tb" aria-label="Дуга"><svg class="i"><use href="#arc"/></svg></button><button class="tb" aria-label="Круг"><svg class="i"><use href="#circ"/></svg></button><button class="tb" aria-label="Облако"><svg class="i"><use href="#cloud"/></svg></button><button class="tb" aria-label="Сплайн"><svg class="i"><use href="#spl"/></svg></button><button class="tb" aria-label="Эллипс"><svg class="i"><use href="#ell"/></svg></button><button class="tb" aria-label="Эллиптическая дуга"><svg class="i"><use href="#ellarc"/></svg></button><button class="tb" aria-label="Вставить блок"><svg class="i"><use href="#insb"/></svg></button><button class="tb" aria-label="Создать блок"><svg class="i"><use href="#mkb"/></svg></button><button class="tb" aria-label="Точка"><svg class="i"><use href="#pt"/></svg></button><button class="tb" aria-label="Штриховка"><svg class="i"><use href="#hat"/></svg></button><button class="tb" aria-label="Градиент"><svg class="i"><use href="#grad"/></svg></button><button class="tb" aria-label="Область"><svg class="i"><use href="#reg"/></svg></button><button class="tb" aria-label="Таблица"><svg class="i"><use href="#tab"/></svg></button><button class="tb" aria-label="Многострочный текст"><svg class="i"><use href="#mtext"/></svg></button></div>
  </aside>
  <section class="doc">
    <svg class="draw" role="img" aria-label="Чертеж">
      <g transform="translate(-31 -131)" shape-rendering="crispEdges" fill="none" stroke="#000">
        <path stroke-dasharray="1 30.900" d="M218 131.500H1247M218 163.500H1247M218 195.500H1247M218 227.500H1247M218 259.500H1247M218 291.500H1247M218 323.500H1247M218 355.500H1247M218 387.500H1247M218 419.500H1247M218 450.500H1247M218 482.500H1247M218 514.500H1247M218 546.500H1247M218 578.500H1247M218 610.500H1247M218 642.500H1247M218 674.500H1247M218 706.500H1247M218 738.500H1247M218 770.500H1247M218 802.500H1247M218 833.500H1247"/>
        <circle cx="410" cy="578.500" r="127.500"/><circle cx="410" cy="578.500" r="63.500"/><circle cx="697" cy="578.500" r="76.500"/><circle cx="697" cy="578.500" r="38"/>
        <path d="M432 704.500L711 654"/>
      </g>
    </svg>
    <div class="tabs">
      <button class="nv" aria-label="Первый"><svg width="9" height="10"><path d="M1 1h1v8h-1zM8 1v8l-5-4z"/></svg></button><button class="nv" aria-label="Назад"><svg width="9" height="10"><path d="M7 1v8l-5-4z"/></svg></button><button class="nv" aria-label="Вперед"><svg width="9" height="10"><path d="M2 1v8l5-4z"/></svg></button><button class="nv" aria-label="Последний"><svg width="9" height="10"><path d="M7 1h1v8h-1zM1 1v8l5-4z"/></svg></button>
      <div class="sheets"><svg width="8" height="16"><path d="M0 0l6 16h2V0z" fill="#fff"/><path class="k" d="M1 0l5 16"/></svg><button class="sheet on">Модель</button><svg width="9" height="16"><path d="M0 0h7l-6 16h-1z" fill="#fff"/><path class="k" d="M7 0l-6 16M1 10l2 6"/></svg><button class="sheet">Лист1</button><svg width="9" height="16"><path class="k" d="M7 0l-6 16"/></svg></div>
    </div>
    <div class="float bar"><i class="grip"></i><button class="tb" aria-label="Зумирование рамкой"><svg class="i"><use href="#zwin"/></svg></button><button class="tb" aria-label="Динамика"><svg class="i"><use href="#zdyn"/></svg></button><button class="tb" aria-label="Масштаб"><svg class="i"><use href="#zsc"/></svg></button><button class="tb" aria-label="Центр"><svg class="i"><use href="#zcen"/></svg></button><button class="tb" aria-label="Объект"><svg class="i"><use href="#zobj"/></svg></button><i class="sep"></i><button class="tb" aria-label="Увеличить"><svg class="i"><use href="#zin"/></svg></button><button class="tb" aria-label="Уменьшить"><svg class="i"><use href="#zout"/></svg></button><i class="sep"></i><button class="tb" aria-label="Все"><svg class="i"><use href="#zall"/></svg></button><button class="tb" aria-label="Границы"><svg class="i"><use href="#zext"/></svg></button><button class="x" aria-label="Закрыть панель"><svg width="6" height="7"><path d="M.5 .5l5 6M5.500 .5l-5 6" stroke="#fff" stroke-width="2"/></svg></button></div>
  </section>
  <aside class="side right">
    <div class="vbar"><i class="hgrip"></i><button class="tb" aria-label="Стереть"><svg class="i"><use href="#erase"/></svg></button><button class="tb" aria-label="Копировать объект"><svg class="i"><use href="#ecopy"/></svg></button><button class="tb" aria-label="Зеркало"><svg class="i"><use href="#mir"/></svg></button><button class="tb" aria-label="Подобие"><svg class="i"><use href="#off"/></svg></button><button class="tb" aria-label="Массив"><svg class="i"><use href="#array"/></svg></button><button class="tb" aria-label="Перенести"><svg class="i"><use href="#move"/></svg></button><button class="tb" aria-label="Повернуть"><svg class="i"><use href="#rot"/></svg></button><button class="tb" aria-label="Масштаб"><svg class="i"><use href="#scale"/></svg></button><button class="tb" aria-label="Растянуть"><svg class="i"><use href="#str"/></svg></button><button class="tb" aria-label="Обрезать"><svg class="i"><use href="#trim"/></svg></button><button class="tb" aria-label="Удлинить"><svg class="i"><use href="#extd"/></svg></button><button class="tb" aria-label="Разорвать в точке"><svg class="i"><use href="#brk1"/></svg></button><button class="tb" aria-label="Разорвать"><svg class="i"><use href="#brk"/></svg></button><button class="tb" aria-label="Соединить"><svg class="i"><use href="#join"/></svg></button><button class="tb" aria-label="Фаска"><svg class="i"><use href="#cham"/></svg></button><button class="tb" aria-label="Сопряжение"><svg class="i"><use href="#fil"/></svg></button><button class="tb" aria-label="Расчленить"><svg class="i"><use href="#expl"/></svg></button></div>
    <div class="vbar"><i class="hgrip"></i><button class="tb" aria-label="На передний план"><svg class="i"><use href="#or1"/></svg></button><button class="tb" aria-label="На задний план"><svg class="i"><use href="#or2"/></svg></button><button class="tb" aria-label="Перед объектом"><svg class="i"><use href="#or3"/></svg></button><button class="tb" aria-label="За объектом"><svg class="i"><use href="#or4"/></svg></button></div>
  </aside>
</main>

<section class="cmd">
  <div class="cgrip"><i></i></div>
  <div class="cbody">
    <div class="hist"><p>Следующая точка или [оТменить]:</p><div class="vs"><button aria-label="Вверх"><svg width="7" height="4"><path d="M0 4h7l-3.500-4z"/></svg></button><button aria-label="Вниз"><svg width="7" height="4"><path d="M0 0h7l-3.500 4z"/></svg></button></div></div>
    <div class="prompt"><label for="cl">Команда:</label><input id="cl" type="text"><div class="hs"><button aria-label="Влево"><svg width="6" height="8"><path d="M5 0l-4 4l4 4" class="sa"/></svg></button><button class="thumb" aria-label="Ползунок"><svg width="7" height="7"><path d="M.5 0v7M2.500 0v7M4.500 0v7M6.500 0v7" stroke="#7f9be0"/></svg></button><i class="trk"></i><button aria-label="Вправо"><svg width="6" height="8"><path d="M1 0l4 4l-4 4" class="sa"/></svg></button></div></div>
  </div>
</section>

<footer class="status">
  <output class="xyz">13.99, -0.96, 0.00</output>
  <div class="grp"><button aria-label="Шаг"><svg class="i"><use href="#snap"/></svg></button><button class="on" aria-label="Сетка"><svg class="i"><use href="#gridi"/></svg></button><button aria-label="Орто"><svg class="i"><use href="#orth"/></svg></button><button aria-label="Полярное"><svg class="i"><use href="#polar"/></svg></button><button class="on" aria-label="Привязка"><svg class="i"><use href="#osn"/></svg></button><button class="on" aria-label="Отслеживание"><svg class="i"><use href="#otr"/></svg></button><button class="on" aria-label="Динамическая ПСК"><svg class="i"><use href="#ducs"/></svg></button><button aria-label="Динамический ввод"><svg class="i"><use href="#dyn"/></svg></button><button aria-label="Вес линий"><svg class="i"><use href="#lwt"/></svg></button><button class="on" aria-label="Быстрые свойства"><svg class="i"><use href="#qp"/></svg></button></div>
  <div class="grp push"><button class="txt">МОДЕЛЬ</button><button aria-label="Листы"><svg class="i"><use href="#mlay"/></svg></button><button aria-label="Быстрый просмотр"><svg class="i"><use href="#qlay"/></svg></button></div>
  <div class="grp g12"><button aria-label="Панорама"><svg class="i"><use href="#pan"/></svg></button><button aria-label="Зум"><svg class="i"><use href="#zoom"/></svg></button><button aria-label="Штурвал"><svg class="i"><use href="#wheel"/></svg></button><button aria-label="Аниматор"><svg class="i"><use href="#show"/></svg></button></div>
  <div class="grp g12"><button class="txt"><svg class="i"><use href="#ann"/></svg>1:1<svg class="d"><use href="#dn"/></svg></button><button aria-label="Видимость аннотаций"><svg class="i"><use href="#annv"/></svg></button><button aria-label="Автомасштаб"><svg class="i"><use href="#anna"/></svg></button></div>
  <div class="grp g6"><button class="txt snug"><svg class="i"><use href="#gear"/></svg>Классический AutoCAD - Пере<svg class="d"><use href="#dn"/></svg></button><button aria-label="Блокировка"><svg class="i"><use href="#lock2"/></svg></button></div>
  <div class="grp g3"><button class="nar" aria-label="Меню строки"><svg class="d5" viewBox="0 0 7 4"><use href="#dn"/></svg></button><button aria-label="Очистить экран"><svg class="i"><use href="#clean"/></svg></button></div>
</footer>
<div class="task"><i class="start"></i><i class="tray"></i></div>
</body>
</html>
```
FILE: styles.css
```css
* { box-sizing: border-box; }
body {
  margin: 0; min-height: 100vh; display: flex; flex-direction: column;
  background: #666; font: 11px/14px "Noto Sans", sans-serif; color: #000;
}
button, input, select { font: inherit; color: inherit; border: 0; margin: 0; padding: 0; background: none; }
button { display: grid; place-items: center; flex: none; }
svg { display: block; flex: none; overflow: visible; }
.sprite { position: absolute; width: 0; height: 0; }
.i { width: 17px; height: 16px; }
.d { width: 7px; height: 4px; }
.d5 { width: 5px; height: 3px; }
.arr { width: 16px; height: 18px; margin: 1px; background: linear-gradient(90deg, #c9d9fd, #a9c2f7); border-radius: 1px; }

/* icon paint */
.k { fill: none; stroke: #3c3f46; }
.k2 { fill: none; stroke: #3c3f46; stroke-width: 1.5; }
.kd { fill: #3c3f46; }
.kw { fill: #f4f4f4; stroke: #3c3f46; }
.f { fill: url(#pg); stroke: #3c4250; }
.fg { fill: #dcdcdc; stroke: #a3a3a3; }
.w { fill: #f2f4f8; }
.nav { fill: #5d6b80; stroke: #2f3a4c; }
.navf { fill: #39475e; }
.navb { fill: #5b7391; }
.gf { fill: #dcdcdc; stroke: #555; }
.gk { fill: #a4a7ae; stroke: #3c3f46; }
.o { fill: #fff; stroke: #e8561c; stroke-width: 1.5; }
.bl { fill: none; stroke: #1468b4; }
.bl2 { fill: none; stroke: #1468b4; stroke-width: 1.5; }
.bo { fill: none; stroke: #1468b4; }
.bf { fill: #bfe0f5; stroke: #1468b4; }
.bs { fill: #0a62b8; }
.rd { fill: none; stroke: #cc2222; }
.ln { fill: #dfeeee; stroke: #555f66; stroke-width: 1.3; }
.hd { stroke: #3a3d40; stroke-width: 3; }
.hd2 { stroke: #3a3d40; stroke-width: 2; }
.wood { stroke: #b06a2c; stroke-width: 2; }
.br { fill: #7a3d12; }
.bolt { fill: #f9a11c; stroke: #d87a08; stroke-width: .5; }
.bulb { fill: #fff0b0; stroke: #f09a1c; stroke-width: 1.5; }
.bulb2 { fill: #fdeb9a; stroke: #6b6342; }
.t { font-family: "Liberation Sans", sans-serif; font-size: 13px; fill: #33363c; }
.t.b { font-weight: 700; }
.t.m { text-anchor: middle; }
.t.l { font-size: 17px; }
.t.b2 { font-size: 19px; stroke: #33363c; stroke-width: .5; }
.t.s { font-size: 8px; }
.t.blue { fill: #1468b4; }
.t.fx { font-family: "Liberation Serif", serif; font-style: italic; font-size: 16px; }
.sa { fill: none; stroke: #4d6185; stroke-width: 2; }

/* title */
.title {
  display: flex; height: 47px; color: #fff; border-bottom: 1px solid #333;
  background: repeating-linear-gradient(135deg, rgba(255,255,255,.04) 0 2px, transparent 2px 4px), linear-gradient(#aeaeae, #828282 50%, #585858);
}
.appmenu { display: flex; align-items: flex-start; width: 60px; flex: none; }
.app { width: 41px; height: 43px; border: 1px solid #2c2c2c; background: linear-gradient(#e2e2e2, #a2a2a2 60%, #c9c9c9); }
.qat { width: 19px; height: 24px; margin-top: 2px; border: 1px solid #333; border-left: 0; }
.titlemain { flex: 1; min-width: 0; }
.caption { height: 27px; padding-left: 257px; display: flex; align-items: center; }
h1 { margin: 0; font: 700 12px/16px "DejaVu Sans Condensed", "Open Sans", sans-serif; display: flex; gap: 15px; white-space: nowrap; }
.menu { display: flex; gap: 21px; margin-left: -8px; height: 20px; align-items: center; white-space: nowrap; font-family: "Liberation Sans", sans-serif; }
.menu button { display: block; }
.info { display: flex; position: relative; flex: none; padding-top: 1px; gap: 17px; margin-left: -80px; }
.infobar { display: flex; align-items: center; height: 24px; border: 1px solid #333; background: rgba(160,160,160,.5); }
.tri { width: 13px; }
.search { width: 180px; height: 21px; background: #f2f2f2; border: 1px solid #ccc; padding: 0 3px; font-style: italic; color: #666; }
.search::placeholder { color: #666; opacity: 1; }
.infobar .dd { width: 10px; fill: #444; }
.wins { display: flex; flex-direction: column; }
.winrow { display: flex; height: 23px; align-items: center; }
.winrow button { width: 17px; height: 17px; }
.winrow .hot { background: #bfe2fb; border: 1px solid #1a70c0; }
.tip { position: absolute; right: 5px; top: 41px; z-index: 3; padding: 4px 3px; height: 24px; background: #f0f0f0; border: 1px solid #b5b5b5; color: #555; }

/* toolbars */
.row { display: flex; gap: 2px; margin-bottom: 3px; }
.bar { display: flex; align-items: center; height: 24px; border: 1px solid #2f2f2f; background: #ebebeb; }
.tight { margin-left: -1px; }
.grip { width: 8px; align-self: stretch; background: radial-gradient(#111 1px, transparent 1px) 1px 2px / 3px 3px, #5a5a5a; }
.hgrip { height: 8px; background: radial-gradient(#111 1px, transparent 1px) 2px 1px / 3px 3px, #5a5a5a; }
.tb { width: 23px; height: 22px; }
.dd { width: 12px; height: 22px; }
.off { opacity: .45; }
.sep { width: 6px; height: 18px; flex: none; background: linear-gradient(#c9c3a5, #c9c3a5) center / 1px 100% no-repeat; }
.combo { display: flex; align-items: center; height: 22px; background: #fff; border: 1px solid #7f9db9; }
.combo select { flex: 1; min-width: 0; height: 18px; appearance: none; padding-left: 4px; }
.combo .in16 { padding-left: 17px; }
.combo .in6 { padding-left: 6px; }
.w119 { width: 119px; } .w120 { width: 120px; } .w126 { width: 126px; } .w149 { width: 149px; } .w160 { width: 160px; } .w175 { width: 175px; } .w299 { width: 299px; }
.sw { width: 11px; height: 11px; background: #000; }
.sw.first { margin: 0 0 0 5px; }
.smp { height: 1px; background: #000; margin: 0 2px 0 4px; }
.l60 { width: 60px; } .l35 { width: 35px; }
.dis { background: #ebe8d8; border-color: #d4d0c0; color: #aca899; }
.dis select { opacity: 1; color: #aca899; }
.dis .arr { background: #eeecdf; opacity: .5; }

/* workspace */
.work { flex: 1; display: flex; gap: 4px; padding: 1px 3px 4px 0; }
.side { display: flex; flex-direction: column; }
.vbar { display: flex; flex-direction: column; width: 25px; border: 1px solid #2f2f2f; background: #ebebeb; }
.doc { flex: 1; min-width: 0; position: relative; display: flex; flex-direction: column; background: #fff; border: 1px solid #9c9a8c; border-right-color: #fff; border-bottom-color: #fff; box-shadow: inset 1px 1px #666459, inset -1px -1px #ece9d8; padding: 1px; }
.draw { flex: 1; width: 100%; min-height: 0; overflow: hidden; }
.tabs { display: flex; height: 17px; border-top: 1px solid #716f64; background: #ece9d8; }
.nv { width: 15px; height: 15px; border: 1px solid #c6c2ae; border-left-color: #fff; fill: #aca899; }
.sheets { display: flex; }
.sheet { padding: 0 3px; height: 16px; }
.sheet.on { background: #fff; }
.float { position: absolute; left: 790px; top: 30px; }
.float .grip { width: 7px; }
.x { width: 8px; height: 22px; background: #5a5a5a; align-content: start; padding-top: 3px; }

/* command line */
.cmd { display: flex; height: 47px; background: #fff; font: 13px/15px "Liberation Mono", monospace; }
.cgrip { width: 15px; padding: 2px; background: #9f9f9f; border-radius: 0 0 3px 0; }
.cgrip i { display: block; width: 11px; height: 4px; background: repeating-linear-gradient(90deg, #333 0 1px, transparent 1px 2px) 0 0 / 100% 1px repeat-x, repeating-linear-gradient(90deg, #333 0 1px, transparent 1px 2px) 0 3px / 100% 1px no-repeat; }
.cbody { flex: 1; display: flex; flex-direction: column; }
.hist { display: flex; height: 28px; border-bottom: 1px solid #aca899; }
.hist p { margin: 0; padding: 1px 2px; flex: 1; }
.vs { display: flex; flex-direction: column; width: 16px; }
.vs button, .hs button { flex: 1; background: linear-gradient(#d5e1fe, #b7cbfa); border: 1px solid #fff; border-radius: 2px; box-shadow: inset 0 0 0 1px #a9bff0; fill: #4d6185; }
.prompt { display: flex; height: 19px; align-items: center; padding-left: 2px; }
.prompt label { padding-top: 4px; }
.prompt input { flex: 1; outline: 0; }
.hs { display: flex; align-self: stretch; padding: 1px 17px 0 1px; width: 84px; background: #ece9d8; }
.hs button { flex: 0 0 16px; }
.trk { flex: 1; background: #f4f3ee; }

/* status */
.status { display: flex; height: 22px; border-top: 1px solid #111; background: linear-gradient(#959595, #7d7d7d); white-space: nowrap; }
.xyz { width: 136px; padding: 4px 12px; }
.grp { display: flex; border-left: 1px solid #555; }
.grp button { width: 22px; height: 21px; border-right: 1px solid #555; background: linear-gradient(#bcbcbc, #9b9b9b); }
.grp .on { background: linear-gradient(#d8eef4, #a3d0df); }
.grp .txt { width: auto; display: flex; align-items: center; gap: 3px; padding: 0 3px; }
.grp .snug { gap: 1px; padding: 0 2px; }
.grp .nar { width: 10px; }
.push { margin-left: auto; }
.g12 { margin-left: 11px; } .g6 { margin-left: 5px; } .g3 { margin-left: 3px; }
.task { display: flex; height: 4px; background: linear-gradient(#3f8cf0, #245edb); justify-content: space-between; }
.start { width: 93px; background: #3f9a3f; border-radius: 0 8px 0 0; }
.tray { width: 92px; background: #16a8f0; }
```
